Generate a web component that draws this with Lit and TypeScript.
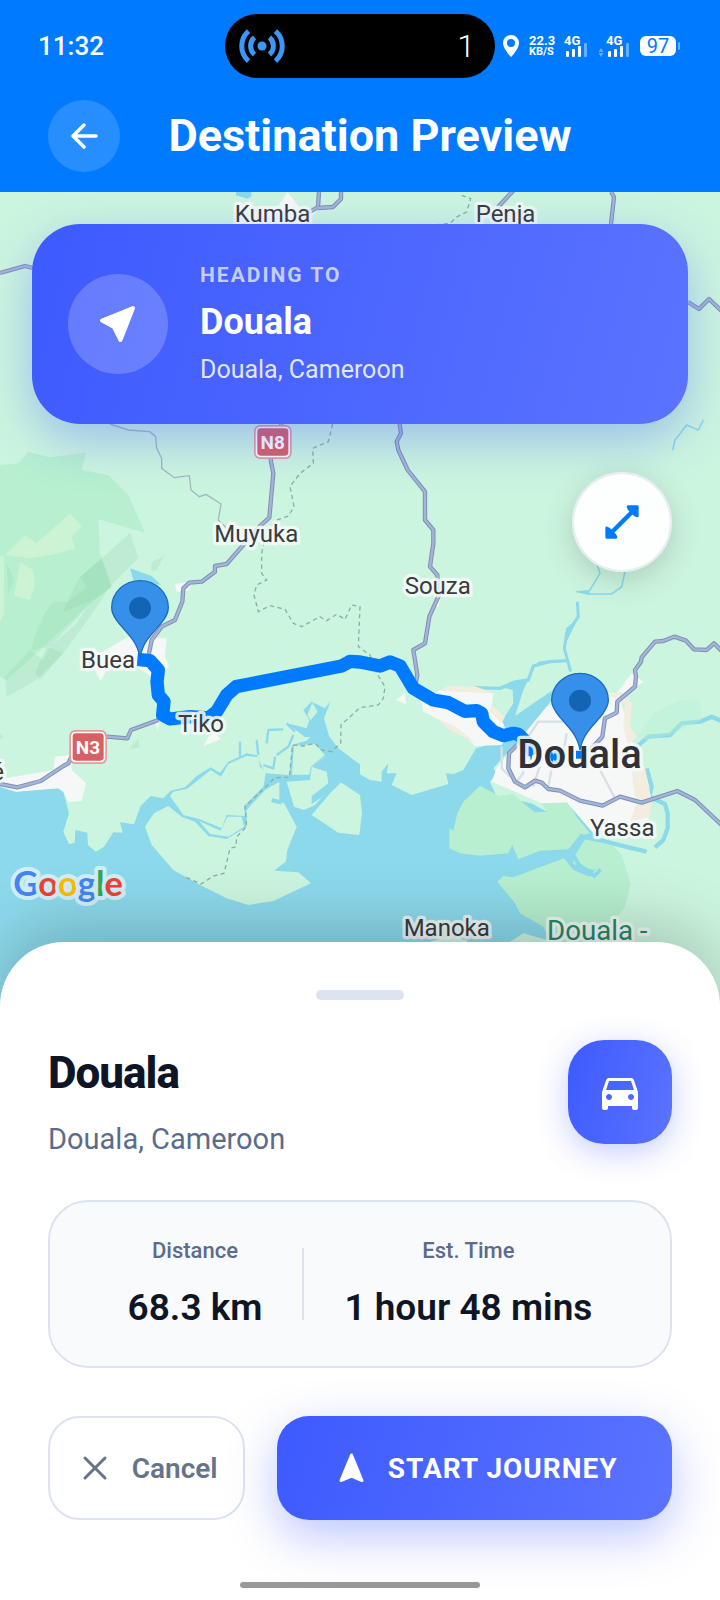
import { LitElement, html, svg, css } from "lit";
import { customElement, property } from "lit/decorators.js";

/** Places named on the map: label, position, size and tone. */
const PLACES = [
  { name: "Kumba", x: 704, y: 90, kind: "town" },
  { name: "Penja", x: 1427, y: 90, kind: "town" },
  { name: "Muyuka", x: 643, y: 1049, kind: "town" },
  { name: "Souza", x: 1214, y: 1205, kind: "town" },
  { name: "Buea", x: 243, y: 1427, kind: "town" },
  { name: "Tiko", x: 534, y: 1619, kind: "town" },
  { name: "é", x: -26, y: 1763, kind: "town" },
  { name: "Yassa", x: 1770, y: 1932, kind: "town" },
  { name: "Manoka", x: 1211, y: 2232, kind: "town" },
  { name: "Douala -", x: 1641, y: 2245, kind: "region" },
  { name: "Douala", x: 1552, y: 1728, kind: "city" },
];

const ROADS = [
  "M848,684 L812,804 820,844 808,977 780,1002 680,1116 645,1122 645,1139 605,1169 568,1172 550,1189 547,1229 525,1284 485,1304 455,1344 445,1394",
  "M1170,600 L1197,684 1203,724 1190,749 1195,774 1223,834 1275,899 1275,984 1300,1014 1300,1054 1290,1124 1312,1149 1315,1214 1288,1274 1275,1354 1240,1374 1252,1449 1245,1484",
  "M1770,1674 L1807,1634 1815,1579 1850,1562 1852,1529 1905,1484 1908,1454 1905,1434 1923,1409 1925,1396 1965,1349 1990,1347 2023,1334 2058,1346 2082,1372 2120,1374 2142,1354 2164,1376",
  "M1560,1649 L1527,1684 1525,1729 1545,1769 1575,1786 1605,1766 1625,1772 1645,1791 1680,1796 1740,1826 1808,1841 1860,1814 1925,1832 2032,1797 2085,1824 2164,1898",
  "M0,1776 L52,1786 122,1767 190,1722 205,1714 220,1684 320,1634 382,1639 393,1614 475,1584",
  "M0,243 L75,222 99,228",
  "M957,0 L954,45 924,63",
  "M1023,0 L1023,21 999,45 954,48",
  "M1540,-4 L1494,45",
  "M1833,0 L1842,15 1833,96",
  "M2064,330 L2097,351 2127,321 2164,356",
];

const MINOR_BORDER =
  "M998,696 L985,749 938,769 940,814 900,844 870,884 882,944 865,972 830,984 800,1014 785,1084 785,1144 800,1164 770,1179 762,1209 775,1259 810,1241 855,1252 880,1294 905,1304 960,1274 980,1286 1010,1267 1035,1282 1055,1239 1080,1244 1075,1364 1110,1389 1130,1444 1155,1484 1150,1519 1135,1539 1080,1547 1023,1599 1022,1654 995,1679 965,1674 945,1654 910,1662 878,1659 868,1756 825,1757 735,1844 740,1904 710,1934 708,1964 690,1969 672,2044 640,2052 603,2076 550,2052";

const ROUTE =
  "M412,1402 L450,1406 475,1434 471,1469 475,1509 492,1529 488,1569 510,1581 570,1574 625,1578 650,1559 680,1509 708,1484 1025,1422 1050,1408 1080,1410 1140,1422 1170,1410 1200,1422 1240,1489 1300,1524 1345,1532 1395,1558 1430,1556 1445,1564 1450,1589 1480,1619 1510,1631 1540,1624 1555,1627 1592,1664 1600,1689";

@customElement("route-map")
export class RouteMap extends LitElement {
  static styles = css`
    :host {
      display: block;
    }
    svg {
      display: block;
      width: 100%;
      height: 100%;
      font-family: Roboto, "Noto Sans", sans-serif;
    }
    .land {
      fill: #ccf5df;
    }
    .water {
      fill: #8cd9ec;
    }
    .forest {
      fill: #b7efd0;
    }
    .urban {
      fill: #f6f7f7;
    }
    .sand {
      fill: #f3ede0;
    }
    .facet {
      fill: #8fcfab;
      opacity: 0.24;
    }
    .glade {
      fill: #d6f5d6;
      opacity: 0.65;
    }
    .river {
      fill: none;
      stroke: #8cd9ec;
      stroke-linejoin: round;
    }
    .road-edge,
    .road {
      fill: none;
      stroke-linejoin: round;
    }
    .road-edge {
      stroke: #7f8fb9;
      stroke-width: 13;
    }
    .road {
      stroke: #a5b5d6;
      stroke-width: 7;
    }
    .street {
      fill: none;
      stroke: #d8dfe6;
      stroke-width: 7;
    }
    .track {
      fill: none;
      stroke: #9fb8c4;
      stroke-width: 4;
    }
    .border {
      fill: none;
      stroke: #8fae9f;
      stroke-width: 4;
      stroke-dasharray: 13 10;
    }
    .route {
      fill: none;
      stroke: #007bff;
      stroke-width: 40;
      stroke-linejoin: round;
    }
    .label {
      paint-order: stroke;
      stroke: #f6faf9;
      stroke-opacity: 0.85;
      stroke-width: 20;
      stroke-linejoin: round;
      fill: #3a3b40;
      font-size: 72px;
    }
    .city {
      fill: #303136;
      font-size: 120px;
      font-weight: 500;
    }
    .region {
      fill: #23896a;
      font-size: 83px;
    }
    .shield {
      fill: #fff;
      font-size: 57px;
      font-weight: 700;
      text-anchor: middle;
    }
    .brand {
      font-family: Lato, sans-serif;
      font-size: 103px;
      font-weight: 700;
      paint-order: stroke;
      stroke: #d0eef6;
      stroke-width: 24;
      stroke-linejoin: round;
    }
    .blue {
      fill: #4285f4;
    }
    .red {
      fill: #ea4335;
    }
    .yellow {
      fill: #fbbc04;
    }
    .green {
      fill: #34a853;
    }
  `;

  private pin(x: number, y: number) {
    return svg`<g transform="translate(${x} ${y})">
      <path d="M0 148 C-8 102 -36 78 -60 50 C-76 31 -85 16 -85 -1 A85 81 0 0 1 85 -1 C85 16 76 31 60 50 C36 78 8 102 0 148Z"
        fill="#3690ea" stroke="#1a6dbd" stroke-width="4" />
      <circle r="33" fill="#1464b4" />
    </g>`;
  }

  private shield(x: number, y: number, text: string) {
    return svg`<g transform="translate(${x} ${y})">
      <rect width="113" height="102" rx="18" fill="#e39b9d" />
      <rect x="5" y="5" width="103" height="92" rx="14" fill="#fff" />
      <rect x="10" y="10" width="93" height="82" rx="10" fill="#d96062" />
      <text class="shield" x="56" y="73">${text}</text>
    </g>`;
  }

  render() {
    return html`<svg viewBox="0 0 2160 2442" preserveAspectRatio="xMidYMin slice" role="img" aria-label="Route from Buea to Douala">
      <rect class="land" width="2160" height="2442" />

      <g transform="translate(0 684)">
        <path class="forest" d="M0,135 L55,130 85,95 150,112 258,98 245,150 325,165 385,225 435,338 295,298 300,400 335,500 260,560 130,680 20,780 0,770Z" />
        <path class="glade" d="M15,405 L75,345 110,370 210,280 245,320 215,350 225,385 180,400 90,415Z" />
        <path class="glade" d="M60,425 L100,450 105,495 90,540 42,528Z" />
        <path class="glade" d="M0,410 L12,405 12,580 0,610Z" />
        <path class="facet" d="M300,420 L390,338 415,415 330,500 270,590 190,700 110,780 20,830 15,770 90,690 130,720 150,680 230,610 270,545 205,545 260,500 240,470Z" />
        <path class="facet" d="M135,578 L160,545 270,545 235,590 150,680 95,690 100,660Z" />
        <path class="facet" d="M240,470 L305,415 335,500 280,540 190,575 205,540Z" />
        <path class="facet" d="M455,425 L493,408 470,450 453,455Z" />
        <path class="facet" d="M20,430 L42,480 25,520Z" />
        <path class="facet" d="M140,680 L190,700 120,780 105,760Z" />
        <path class="water" d="M390,445 L455,468 483,495 400,480Z" />
        <path class="urban" d="M525,492 L572,485 568,512 530,515Z" />
        <path class="urban" d="M300,700 L385,650 500,655 495,710 507,740 470,780 400,735 320,750 302,783 275,735 280,680Z" />
      </g>
      <path class="urban" d="M835,42 L863,0 900,48 950,60 900,96 780,90 775,50Z" />
      <path class="water" d="M708,0 H754 V14 L742,20 708,10Z" />

      <g transform="translate(0 1344)">
        <path class="water" d="M0,440 L45,455 100,450 175,445 190,455 207,520 190,575 207,612 224,608 226,570 262,578 264,615 287,635 312,620 340,577 368,578 360,547 402,553 422,497 452,468 490,475 512,452 555,442 590,408 632,382 660,398 685,365 740,340 770,345 795,400 868,405 876,315 925,300 885,268 858,250 895,258 920,265 928,240 910,210 935,185 975,205 992,183 972,235 988,290 1015,325 1075,370 1080,403 1110,420 1145,425 1145,395 1165,370 1160,400 1190,400 1175,435 1235,465 1345,432 1338,400 1360,402 1390,390 1428,325 1510,300 1515,260 1505,245 1540,190 1538,150 1500,140 1540,122 1585,120 1570,150 1545,228 1655,152 1655,180 1600,250 1480,385 1490,400 1470,425 1495,468 1640,500 1720,500 1790,590 1860,605 1640,860 1640,1100 0,1100Z" />
        <path class="land" d="M922,225 L937,188 953,215 932,240Z M905,290 L932,292 912,305Z" />
        <path class="land" d="M435,560 L462,520 505,498 545,530 585,545 625,588 680,597 740,560 740,510 795,450 838,425 838,485 852,490 890,560 862,630 857,665 822,692 895,697 933,730 820,783 745,795 680,775 600,735 520,690 455,615Z" />
        <path class="land" d="M510,468 L520,455 562,446 632,390 663,410 685,372 740,347 775,352 780,380 800,400 790,440 732,498 735,528 680,525 665,565 600,538 550,525Z" />
        <path class="land" d="M597,543 L662,572 682,530 725,530 732,560 685,590 630,582Z" />
        <path class="land" d="M860,425 L930,420 935,380 975,350 985,395 1005,430 945,495 912,510 882,500Z" />
        <path class="land" d="M882,317 L945,312 975,345 932,380 928,406 876,405Z" />
        <path class="land" d="M935,525 L1020,425 1080,465 1086,520 1078,585 1015,578Z" />
        <path class="water" d="M935,380 L985,345 1080,372 1080,460 1025,425 1000,450 935,492 935,468 985,430 980,395Z" />
        <path class="land" d="M1470,425 L1545,435 1635,490 1640,515 1560,470 1490,470Z" />
        <path class="forest" d="M1440,437 L1480,458 1495,468 1540,462 1570,490 1605,517 1640,515 1625,490 1705,487 1730,530 1770,580 1735,590 1705,628 1620,632 1555,658 1537,615 1525,640 1440,647 1380,640 1348,625 1348,565 1360,572 1372,520 1390,485Z" />
        <path class="land" d="M1790,590 L1880,600 2160,600 2160,1100 1800,1100 1760,860 1880,740Z" />
        <path class="forest" d="M1492,725 L1510,708 1540,712 1692,655 1720,690 1780,715 1802,685 1780,690 1720,672 1722,650 1760,590 1830,605 1865,645 1892,730 1875,800 1830,860 1700,1000 1630,860 1560,820 1545,790Z" />
        <path class="land" d="M1530,905 L1570,880 1640,900 1640,920 1530,920Z M1290,905 L1340,890 1400,900 1400,920Z" />
        <path class="river" stroke-width="12" d="M1720,645 L1735,672 1782,708 1802,688" />
        <path class="river" stroke-width="13" d="M1738,588 L1800,600 1885,622 1940,635 M1965,622 L1990,600 2003,565 2003,520 1995,492 1948,470 1955,440 1940,385" />
        <path class="river" stroke-width="13" d="M1905,325 L1945,290 2010,285 2045,250 2100,245 2135,230 2162,242" />
        <path class="river" stroke-width="10" d="M1425,143 L1500,145 1550,125 1585,120 1600,78 1650,65 1705,62" />
        <path class="river" stroke-width="7" d="M720,305 L720,350 M775,345 L770,300 M825,350 L820,385 790,375 M830,345 L865,320 880,285 M800,310 L805,270 850,268 M860,250 L885,275 M800,400 L795,440" />
        <path class="river" stroke-width="12" d="M870,410 H930 M815,480 L845,488" />
        <path class="forest" d="M1910,290 L1960,220 2040,180 2100,178 2105,240 2010,285 1940,300Z" opacity=".4" />

        <path class="urban" d="M1265,185 L1320,150 1480,160 1475,200 1510,250 1520,290 1505,315 1425,318 1370,265 1270,215Z" />
        <path class="sand" d="M1320,152 L1345,138 1430,140 1480,160 1390,155Z M1475,195 L1515,230 1505,250 1470,215Z M1310,235 L1370,262 1430,312 1350,270Z" />
        <path class="urban" d="M1490,385 L1550,310 1640,200 1740,160 1850,160 1895,100 1930,125 1860,175 1885,270 1930,400 1955,480 1945,540 1780,580 1700,487 1625,490 1475,425Z" />
        <path class="sand" d="M1825,165 L1865,155 1895,190 1890,260 1910,290 1890,310 1935,385 1955,480 1950,530 1890,545 1910,490 1900,440 1890,340 1870,260 1875,190Z" />
        <path class="urban" d="M15,415 L160,390 165,350 215,345 215,390 258,430 245,482 205,487 190,455 175,445 50,455 0,440Z" />
        <path class="urban" d="M610,318 L625,290 645,280 663,298Z M465,240 L480,238 472,272Z M1188,180 L1215,160 1218,193Z" />
        <path class="facet" d="M385,330 L415,295 418,322Z M0,280 L10,290 0,300Z" />
        <path class="street" d="M1585,290 L1615,245 1690,245 M1700,280 L1690,340 1660,360 1645,440 M1505,320 L1505,385 1530,410 M1620,375 L1600,440 M1800,390 L1845,475 M1560,350 L1570,400 1545,430" />
      </g>

      <g transform="translate(1080 684)">
        <path class="river" stroke-width="5" d="M710,430 L720,460 685,518 M650,515 L690,522 755,522 785,500 795,455" />
        <path class="water" d="M645,514 L685,510 688,526Z" />
        <path class="river" stroke-width="9" d="M652,545 L655,590 620,640 613,685 632,755" />
        <path class="water" d="M655,595 L618,625 612,680 622,660Z M520,742 L535,725 570,721Z" />
        <path class="river" stroke-width="5" d="M1030,0 L1015,30 980,15 945,60 938,90" />
        <path class="urban" d="M105,65 L115,60 118,100Z M222,560 L240,535 236,560Z" />
      </g>

      <path class="track" d="M330,696 L385,714 450,719 467,734 470,769 485,799 485,829 523,857 568,851 573,894 598,914 618,907 663,936 655,984 680,1009" />
      <path class="border" d="${MINOR_BORDER}" />
      <path class="border" d="M1385,10 L1412,20 1400,60 1370,75 1350,94 1310,98" />
      ${ROADS.map((d) => svg`<path class="road-edge" d=${d} /><path class="road" d=${d} />`)}

      <path class="route" d="${ROUTE}" />
      <path class="route" d="M1640,1694 L1680,1696" />

      ${this.shield(762, 699, "N8")} ${this.shield(208, 1614, "N3")}
      ${PLACES.map((p) => svg`<text class="label ${p.kind}" x=${p.x} y=${p.y}>${p.name}</text>`)}
      <path d="M1588,1667 q14,22 4,40 z M1655,1680 q14,14 2,30 q-12,-14 -2,-30z M1728,1676 h18 v24 h-18z" fill="#007bff" />
      ${this.pin(420, 1248)} ${this.pin(1740, 1526)}
      <text class="brand" x="40" y="2113"><tspan class="blue">G</tspan><tspan class="red">o</tspan><tspan class="yellow">o</tspan><tspan class="blue">g</tspan><tspan class="green">l</tspan><tspan class="red">e</tspan></text>
    </svg>`;
  }
}

@customElement("signal-meter")
export class SignalMeter extends LitElement {
  @property({ type: Boolean }) data = false;

  static styles = css`
    :host {
      display: block;
    }
    svg {
      display: block;
      font: 700 13px Roboto, sans-serif;
      fill: #fff;
    }
  `;

  render() {
    const shift = this.data ? 8 : 0;
    return html`<svg width=${24 + shift} height="24" viewBox="${-shift} 0 ${24 + shift} 24">
      <text x="0" y="11">4G</text>
      <rect x="2" y="17" width="3" height="6" rx="1" />
      <rect x="8" y="15" width="3" height="8" rx="1" />
      <rect x="14" y="12" width="3" height="11" rx="1" />
      <rect x="20" y="9" width="3" height="14" rx="1" opacity=".4" />
      ${this.data ? svg`<path d="M-5 14l2.500 4h-5z M-5 23l2.500-4h-5z" opacity=".4" />` : ""}
    </svg>`;
  }
}

@customElement("app-root")
export class AppRoot extends LitElement {
  static styles = css`
    :host {
      display: flex;
      flex-direction: column;
      min-height: 100vh;
      box-sizing: border-box;
      background: #fff;
      color: #0d1526;
      font-family: Roboto, "Noto Sans", sans-serif;
      --accent: linear-gradient(104deg, #3d5afe, #5b73ff);
      --line: #dde3f2;
      --muted: #5b6b8c;
    }
    * {
      box-sizing: border-box;
    }
    h1,
    h2,
    p,
    dl,
    dt,
    dd {
      margin: 0;
    }
    button {
      font: inherit;
      border: 0;
      padding: 0;
      cursor: pointer;
    }
    svg {
      display: block;
      flex: none;
    }
    .top {
      background: #007bff;
      color: #fff;
      padding: 14px 0 20px;
    }
    .status {
      display: grid;
      grid-template-columns: 1fr 270px 1fr;
      align-items: center;
    }
    .clock {
      padding-left: 38px;
      font-size: 26px;
      line-height: 32px;
      font-weight: 500;
    }
    .island {
      display: flex;
      align-items: center;
      justify-content: space-between;
      height: 64px;
      padding: 0 20px 0 14px;
      border-radius: 32px;
      background: #000;
      font-size: 32px;
      font-weight: 300;
    }
    .indicators {
      display: flex;
      align-items: center;
      gap: 10px;
      padding-left: 8px;
    }
    .speed {
      display: flex;
      flex-direction: column;
      width: 25px;
      font-size: 13px;
      line-height: 12px;
      font-weight: 700;
    }
    .unit {
      font-size: 11px;
      line-height: 10px;
    }
    .battery {
      display: flex;
      align-items: center;
      gap: 2px;
    }
    .charge {
      width: 36px;
      border-radius: 6px;
      background: #fff;
      color: #007bff;
      font-size: 20px;
      line-height: 20px;
      font-weight: 400;
      text-align: center;
    }
    .nub {
      width: 2px;
      height: 8px;
      border-radius: 1px;
      background: rgba(255, 255, 255, 0.4);
    }
    .bar {
      display: grid;
      grid-template-columns: 72px 1fr 52px;
      align-items: center;
      padding: 22px 48px 0;
    }
    .back {
      display: grid;
      place-items: center;
      width: 72px;
      height: 72px;
      border-radius: 50%;
      background: rgba(255, 255, 255, 0.15);
    }
    .title {
      text-align: center;
      font-size: 45px;
      line-height: 52px;
      font-weight: 700;
    }
    .stage {
      position: relative;
      flex: 1;
      display: flex;
      flex-direction: column;
      gap: 48px;
      min-height: 480px;
      padding: 32px 32px 96px;
    }
    .map {
      position: absolute;
      inset: 0;
    }
    .heading {
      position: relative;
      display: flex;
      align-items: center;
      gap: 32px;
      height: 200px;
      padding: 0 36px;
      border-radius: 48px;
      background: var(--accent);
      box-shadow: 0 16px 48px rgba(61, 90, 254, 0.35);
      color: #fff;
    }
    .badge {
      display: grid;
      place-items: center;
      flex: none;
      width: 100px;
      height: 100px;
      border-radius: 50%;
      background: rgba(255, 255, 255, 0.2);
    }
    .eyebrow {
      font-size: 21px;
      line-height: 26px;
      font-weight: 700;
      letter-spacing: 2px;
      color: rgba(255, 255, 255, 0.7);
    }
    .place {
      margin: 12px 0 10px;
      font-size: 36px;
      line-height: 44px;
      font-weight: 700;
    }
    .address {
      font-size: 25px;
      line-height: 32px;
      color: rgba(255, 255, 255, 0.85);
    }
    .expand {
      position: relative;
      align-self: flex-end;
      display: grid;
      place-items: center;
      width: 100px;
      height: 100px;
      margin-right: 16px;
      border: 2px solid #ececf4;
      border-radius: 50%;
      background: rgba(255, 255, 255, 0.95);
      background-clip: padding-box;
      box-shadow: 0 8px 32px rgba(0, 0, 0, 0.16);
    }
    .sheet {
      position: relative;
      margin-top: -64px;
      padding: 48px 48px 12px;
      border-radius: 64px 64px 0 0;
      background: #fff;
      box-shadow: 0 -16px 64px rgba(0, 0, 0, 0.2);
    }
    .grip {
      width: 88px;
      height: 10px;
      margin: 0 auto 40px;
      border-radius: 5px;
      background: #dde3f0;
    }
    .summary {
      display: flex;
      justify-content: space-between;
      align-items: flex-start;
    }
    .name {
      margin-bottom: 12px;
      font-size: 44px;
      line-height: 66px;
      font-weight: 800;
      letter-spacing: -1px;
    }
    .where {
      font-size: 29px;
      line-height: 42px;
      color: var(--muted);
    }
    .vehicle {
      display: grid;
      place-items: center;
      width: 104px;
      height: 104px;
      border-radius: 36px;
      background: var(--accent);
      box-shadow: 0 8px 32px rgba(61, 90, 254, 0.3);
    }
    .stats {
      display: flex;
      justify-content: center;
      align-items: center;
      gap: 40px;
      height: 168px;
      margin-top: 40px;
      border: 2px solid var(--line);
      border-radius: 40px;
      background: #f8fafc;
      text-align: center;
    }
    .label {
      margin-bottom: 20px;
      font-size: 22px;
      line-height: 28px;
      font-weight: 500;
      color: var(--muted);
    }
    .value {
      font-size: 37px;
      line-height: 46px;
      font-weight: 600;
    }
    .divider {
      width: 2px;
      height: 72px;
      background: var(--line);
    }
    .actions {
      display: grid;
      grid-template-columns: 1fr 2fr;
      gap: 32px;
      margin: 48px 0 62px;
    }
    .action {
      display: flex;
      align-items: center;
      justify-content: center;
      gap: 16px;
      min-width: 0;
      height: 104px;
      border-radius: 32px;
      font-size: 28px;
      white-space: nowrap;
    }
    .cancel {
      border: 2px solid var(--line);
      background: #fff;
      color: #64748b;
      font-weight: 600;
    }
    .start {
      background: var(--accent);
      box-shadow: 0 16px 48px rgba(61, 90, 254, 0.35);
      color: #fff;
      font-weight: 700;
      letter-spacing: 1px;
    }
    .home {
      width: 240px;
      height: 6px;
      margin: 0 auto;
      border-radius: 3px;
      background: #999;
    }
  `;

  render() {
    return html`
      <header class="top">
        <div class="status">
          <span class="clock">11:32</span>
          <div class="island">
            <svg width="46" height="36" viewBox="-23 -18 46 36" fill="none" stroke="#3a98f8" stroke-width="5">
              <circle r="4.500" fill="#3a98f8" stroke="none" />
              <path d="M-7.500-8.500A11.200 11.200 0 0 0-7.500 8.500M7.500-8.500A11.200 11.200 0 0 1 7.500 8.500M-13.500-15A20 20 0 0 0-13.500 15M13.500-15A20 20 0 0 1 13.500 15" />
            </svg>
            <span>1</span>
          </div>
          <div class="indicators">
            <svg width="16" height="22" viewBox="0 0 16 22" fill="#fff">
              <path fill-rule="evenodd" d="M8 0a8 8 0 0 0-8 8c0 6 8 14 8 14s8-8 8-14a8 8 0 0 0-8-8zm0 4a4 4 0 1 1 0 8 4 4 0 0 1 0-8z" />
            </svg>
            <span class="speed"><span>22.3</span><span class="unit">KB/S</span></span>
            <signal-meter></signal-meter>
            <signal-meter data></signal-meter>
            <div class="battery"><span class="charge">97</span><span class="nub"></span></div>
          </div>
        </div>
        <div class="bar">
          <button class="back" aria-label="Back">
            <svg width="28" height="28" viewBox="0 0 28 28" fill="none" stroke="#fff" stroke-width="3.500" stroke-linecap="round" stroke-linejoin="round">
              <path d="M14 3L3 14l11 11M4 14h22" />
            </svg>
          </button>
          <h1 class="title">Destination Preview</h1>
        </div>
      </header>

      <main class="stage">
        <route-map class="map"></route-map>
        <section class="heading">
          <div class="badge">
            <svg width="38" height="38" viewBox="0 0 38 38" fill="#fff" stroke="#fff" stroke-width="4" stroke-linejoin="round">
              <path d="M34 3L3 15.500l12 6.500 6.500 13z" />
            </svg>
          </div>
          <div>
            <p class="eyebrow">HEADING TO</p>
            <p class="place">Douala</p>
            <p class="address">Douala, Cameroon</p>
          </div>
        </section>
        <button class="expand" aria-label="Expand map">
          <svg width="34" height="34" viewBox="0 0 102 102" fill="#007bff" stroke="#007bff" stroke-linecap="round" stroke-linejoin="round">
            <path d="M18 84L84 18" stroke-width="13" />
            <path d="M69 5H97V33L90 30 72 12Z M5 69V97H33L30 90 12 72Z" stroke-width="8" />
          </svg>
        </button>
      </main>

      <section class="sheet">
        <div class="grip"></div>
        <div class="summary">
          <div>
            <h2 class="name">Douala</h2>
            <p class="where">Douala, Cameroon</p>
          </div>
          <div class="vehicle">
            <svg width="48" height="48" viewBox="0 -1 24 24" fill="#fff">
              <path d="M18.920 5.010C18.720 4.420 18.160 4 17.500 4h-11c-.66 0-1.210.42-1.420 1.010L3 11v8c0 .55.450 1 1 1h1c.55 0 1-.45 1-1v-1h12v1c0 .55.450 1 1 1h1c.55 0 1-.45 1-1v-8l-2.080-5.990zM6.500 15c-.83 0-1.500-.67-1.500-1.500S5.670 12 6.500 12s1.500.67 1.500 1.500S7.330 15 6.500 15zm11 0c-.83 0-1.500-.67-1.500-1.500s.67-1.500 1.500-1.500 1.500.67 1.500 1.500-.67 1.500-1.500 1.500zM5 10l1.500-4.500h11L19 10H5z" />
            </svg>
          </div>
        </div>
        <dl class="stats">
          <div>
            <dt class="label">Distance</dt>
            <dd class="value">68.3 km</dd>
          </div>
          <div class="divider"></div>
          <div>
            <dt class="label">Est. Time</dt>
            <dd class="value">1 hour 48 mins</dd>
          </div>
        </dl>
        <div class="actions">
          <button class="action cancel">
            <svg width="40" height="40" viewBox="0 0 40 40" fill="none" stroke="currentColor" stroke-width="3" stroke-linecap="round">
              <path d="M9 10l20 20M29 10L9 30" />
            </svg>
            Cancel
          </button>
          <button class="action start">
            <svg width="40" height="40" viewBox="0 0 40 40" fill="#fff" stroke="#fff" stroke-width="3" stroke-linejoin="round">
              <path d="M19.500 7l10.500 25.500L19.500 28 9 32.500z" />
            </svg>
            START JOURNEY
          </button>
        </div>
        <div class="home"></div>
      </section>
    `;
  }
}
